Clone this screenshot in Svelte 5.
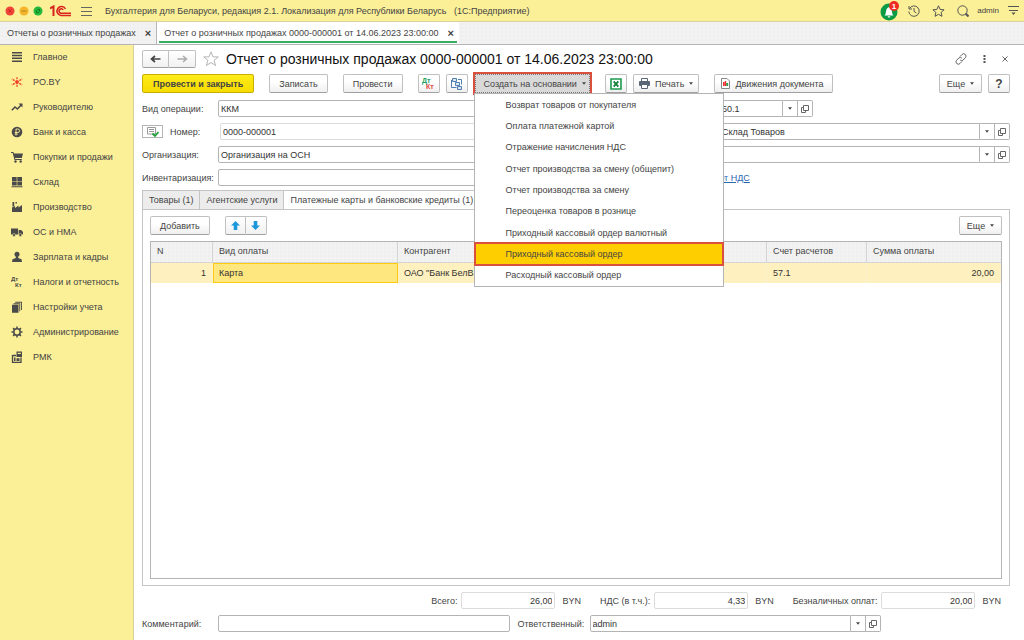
<script>
  const sections = [
    { name: 'Главное', icon: 'lines' },
    { name: 'PO.BY', icon: 'spark' },
    { name: 'Руководителю', icon: 'trend' },
    { name: 'Банк и касса', icon: 'coin' },
    { name: 'Покупки и продажи', icon: 'cart' },
    { name: 'Склад', icon: 'boxes' },
    { name: 'Производство', icon: 'factory' },
    { name: 'ОС и НМА', icon: 'truck' },
    { name: 'Зарплата и кадры', icon: 'person' },
    { name: 'Налоги и отчетность', icon: 'dtkt' },
    { name: 'Настройки учета', icon: 'books' },
    { name: 'Администрирование', icon: 'gear' },
    { name: 'РМК', icon: 'register' }
  ];

  const actions = [
    'Возврат товаров от покупателя',
    'Оплата платежной картой',
    'Отражение начисления НДС',
    'Отчет производства за смену (общепит)',
    'Отчет производства за смену',
    'Переоценка товаров в рознице',
    'Приходный кассовый ордер валютный',
    'Приходный кассовый ордер',
    'Расходный кассовый ордер'
  ];
  let current = $state(7);

  const totals = [
    { id: 'total', label: 'Всего:', value: '26,00' },
    { id: 'vat', label: 'НДС (в т.ч.):', value: '4,33' },
    { id: 'cashless', label: 'Безналичных оплат:', value: '20,00' }
  ];
</script>

{#snippet caret()}
  <svg class="caret" viewBox="0 0 5 3" width="4" height="3"><path d="M0 0h5L2.500 3z" fill="#444" /></svg>
{/snippet}

{#snippet fieldButtons()}
  <button class="fbtn" aria-label="Выбрать">{@render caret()}</button>
  <button class="fbtn" aria-label="Открыть">
    <svg viewBox="0 0 8 8" width="8" height="8" fill="none" stroke="#666"><path d="M2.500 .5h5v5h-5zM2.500 2.500h-2v5h4v-2" /></svg>
  </button>
{/snippet}

{#snippet sectionIcon(name)}
  <svg class="sicon" viewBox="0 0 12 12" width="12" height="12" fill="#4a4a4a">
    {#if name === 'lines'}
      <path d="M1 1h10v1.500H1zM1 3.800h10v1.500H1zM1 6.600h10v1.500H1zM1 9.400h10v1.500H1z" />
    {:else if name === 'spark'}
      <g stroke="#f0402a" stroke-width="1.300" stroke-dasharray="2 .7"><path d="M6 6V.5M6 6v5.500M6 6L.8 3M6 6l5.200-3M6 6L.8 9M6 6l5.200 3" /></g>
      <circle cx="6" cy="6" r="1.500" fill="#f0402a" />
    {:else if name === 'trend'}
      <path d="M.8 9.200L4 6l2.400 2 3.800-4" fill="none" stroke="#4a4a4a" stroke-width="1.600" /><path d="M7.500 2.500h4v4z" />
    {:else if name === 'coin'}
      <circle cx="6" cy="6" r="5.300" /><path d="M5 9.500V3h1.800a1.700 1.700 0 010 3.500H3.800M3.800 8h3" fill="none" stroke="#fbef97" stroke-width=".9" />
    {:else if name === 'cart'}
      <path d="M0 1h2.400l.6 1.500h9L10.800 7H4l.3 1h6.500v1H3.500L1.700 2H0z" /><circle cx="4.500" cy="10.500" r="1.200" /><circle cx="9.700" cy="10.500" r="1.200" />
    {:else if name === 'boxes'}
      <path d="M1 1h4.700v4H1zM6.300 1H11v4H6.300zM1 5.600h4.700v4H1zM6.300 5.600H11v4H6.300zM.5 10.200h11v1H.5z" />
    {:else if name === 'factory'}
      <path d="M1 11V6.500L4 5v2l3.500-2.500v2L11 4v7zM1.500 1h1.700v4l-1.700.8zM4.500 1h1.400v1.500H4.500z" />
    {:else if name === 'truck'}
      <path d="M0 2.500h7v6H0zM7.600 4h2.600L12 6v2.500H7.600z" /><circle cx="3" cy="9" r="1.500" stroke="#fbef97" stroke-width=".5" /><circle cx="9.300" cy="9" r="1.500" stroke="#fbef97" stroke-width=".5" />
    {:else if name === 'person'}
      <circle cx="6" cy="3.200" r="2.500" /><path d="M4.800 5h2.400v2l3.300 1.300.5 2.700H1l.5-2.700L4.800 7z" />
    {:else if name === 'dtkt'}
      <text x="0" y="5" font-size="6" font-weight="700">Дт</text><text x="4" y="11" font-size="6" font-weight="700">Кт</text>
    {:else if name === 'books'}
      <path d="M1 3.800h6.500v8H1zM2.500 2.300h6.700v8h-.9V3.200H2.500zM4.200.8H11V9h-.9V1.700H4.200z" />
    {:else if name === 'gear'}
      <circle cx="6" cy="6" r="3.200" fill="none" stroke="#4a4a4a" stroke-width="1.500" />
      <path d="M6 .5v2M6 9.500v2M.5 6h2M9.500 6h2M2.100 2.100l1.500 1.500M8.400 8.400l1.500 1.500M2.100 9.900l1.500-1.500M8.400 3.600l1.500-1.500" stroke="#4a4a4a" stroke-width="1.500" />
    {:else}
      <path d="M1.500 4.500h3.500M1.500 4v7.500h8.500V6.500" fill="none" stroke="#4a4a4a" stroke-width="1.300" /><path d="M5.500.5H11v5.500H5.500zM3 6.500h1.500v3.500H3zM5.500 7.300h3V10h-3z" /><path d="M6.700 1.800h3.200v1.200H6.700z" fill="#fbef97" />
    {/if}
  </svg>
{/snippet}

<div class="app">
  <header class="titlebar">
    <svg width="38" height="10" viewBox="0 0 38 10">
      <circle cx="5" cy="5" r="4.500" fill="#f04438" /><path d="M3.500 3.500l3 3M6.500 3.500l-3 3" stroke="#c92a20" />
      <circle cx="19" cy="5" r="4.500" fill="#f3b52c" /><path d="M16.500 5h5" stroke="#b98317" />
      <circle cx="33" cy="5" r="4.500" fill="#25b83c" /><path d="M31.500 4.500v2h2M32.500 3.500h2v2" stroke="#0b7a1c" fill="none" />
    </svg>
    <svg class="logo" width="21" height="12" viewBox="0 0 21 12" fill="none" stroke="#d8231f">
      <path d="M0 3.500L3.500 1.500v9.500" stroke-width="2" />
      <path d="M15.500 4A4.500 4.500 0 1011 10.500h10" stroke-width="1.500" /><path d="M13.200 5A2.200 2.200 0 1011.500 8.200H21" stroke-width="1.500" />
    </svg>
    <button class="plain burger" aria-label="Меню">
      <svg width="11" height="10" viewBox="0 0 11 10" stroke="#666"><path d="M0 1.500h11M0 5.500h11M0 9.500h11" /></svg>
    </button>
    <span class="apptitle">Бухгалтерия для Беларуси, редакция 2.1. Локализация для Республики Беларусь&nbsp;&nbsp; (1С:Предприятие)</span>
    <div class="tools">
      <button class="plain bell" aria-label="Уведомления">
        <svg width="20" height="20" viewBox="0 0 20 20">
          <circle cx="9" cy="11" r="8.500" fill="#0b9b45" /><path d="M4.500 14.500c2-1.500 1-6 3-7.500l1.500-1 1.500 1c2 1.500 1 6 3 7.500zM7.500 15.200h3L9 17z" fill="#fff" />
          <circle cx="14" cy="5" r="5" fill="#ee2e24" /><text x="14" y="8" font-size="8" font-weight="700" fill="#fff" text-anchor="middle">1</text>
        </svg>
      </button>
      <button class="plain" aria-label="История">
        <svg width="12" height="12" viewBox="0 0 12 12" fill="none" stroke="#555"><path d="M1.500 3.500a5.200 5.200 0 11-.7 3M1 1v3h3M6 3v3.300l2.300 1.700" /></svg>
      </button>
      <button class="plain" aria-label="Избранное">
        <svg width="13" height="12" viewBox="0 0 13 12" fill="none" stroke="#555"><path d="M6.500.8l1.600 3.600 4 .4-3 2.600.9 3.900-3.500-2-3.500 2 .9-3.900-3-2.600 4-.4z" /></svg>
      </button>
      <button class="plain" aria-label="Поиск">
        <svg width="12" height="12" viewBox="0 0 12 12" fill="none" stroke="#555"><circle cx="5.500" cy="5.500" r="4.700" /><path d="M8.500 8.500L11.500 11.500" stroke-width="2" /></svg>
      </button>
      <span class="user">admin</span>
      <button class="plain" aria-label="Настройки">
        <svg width="11" height="9" viewBox="0 0 11 9"><path d="M0 .5h11M1 4.500h9" stroke="#555" /><path d="M3.500 6.500h4l-2 2.500z" fill="#555" /></svg>
      </button>
    </div>
  </header>

  <nav class="tabs textured">
    <div class="tab"><span>Отчеты о розничных продажах</span><button class="plain x" aria-label="Закрыть">×</button></div>
    <div class="tab active"><span>Отчет о розничных продажах 0000-000001 от 14.06.2023 23:00:00</span><button class="plain x" aria-label="Закрыть">×</button></div>
  </nav>

  <div class="body">
    <aside>
      {#each sections as s}
        <a href="#section">{@render sectionIcon(s.icon)}<span>{s.name}</span></a>
      {/each}
    </aside>

    <main>
      <div class="heading">
        <div class="pair nav">
          <button aria-label="Назад"><svg width="11" height="8" viewBox="0 0 11 8"><path d="M10.500 4H2M5 1L1.500 4 5 7" fill="none" stroke="#444" stroke-width="1.700" /></svg></button>
          <button aria-label="Вперед"><svg width="11" height="8" viewBox="0 0 11 8"><path d="M.5 4h8.500M6 1l3.500 3L6 7" fill="none" stroke="#aaa" stroke-width="1.500" /></svg></button>
        </div>
        <svg width="16" height="16" viewBox="0 0 16 16" fill="none" stroke="#b4b4b4"><path d="M8 .9l2 5h5.300l-4.200 3.400 1.500 5.300L8 11.500l-4.600 3.100 1.500-5.300L.7 5.900H6z" /></svg>
        <h1>Отчет о розничных продажах 0000-000001 от 14.06.2023 23:00:00</h1>
        <div class="winbtns">
          <button class="plain" aria-label="Ссылка"><svg width="12" height="12" viewBox="0 0 12 12" fill="none" stroke="#666"><path d="M5 3.500l2-2a2.200 2.200 0 013.300 3.300L8.200 7a2.200 2.200 0 01-3 0M7 8.500l-2 2a2.200 2.200 0 01-3.300-3.300L3.800 5a2.200 2.200 0 013 0" /></svg></button>
          <button class="plain" aria-label="Действия"><svg width="3" height="8" viewBox="0 0 3 8" fill="#555"><path d="M.5 0h2v2h-2zM.5 3h2v2h-2zM.5 6h2v2h-2z" /></svg></button>
          <button class="plain" aria-label="Закрыть"><svg width="6" height="6" viewBox="0 0 6 6" stroke="#666"><path d="M.5.500l5 5M5.500.500l-5 5" /></svg></button>
        </div>
      </div>

      <div class="commands">
        <button class="btn primary">Провести и закрыть</button>
        <button class="btn">Записать</button>
        <button class="btn">Провести</button>
        <div class="icons">
          <button class="btn sq" aria-label="Проводки"><svg width="13" height="13" viewBox="0 0 13 13" font-size="7" font-weight="700"><text x="0" y="6" fill="#24a05a">Дт</text><text x="4" y="12" fill="#e2483c">Кт</text></svg></button>
          <button class="btn sq" aria-label="Структура"><svg width="12" height="12" viewBox="0 0 12 12" fill="#dbe7f5" stroke="#4f7fb5"><path d="M1.500.5h4v3h-4zM4.500 4.500h4v3h-4zM6.500 8.500h4v3h-4z" /><path d="M.5 2v7.500h5M7 1.500h3.500v5" fill="none" /></svg></button>
        </div>
        <div class="create">
          <button class="btn open">Создать на основании {@render caret()}</button>
          <div class="menu" role="menu">
            {#each actions as a, i}
              <button role="menuitem" class:current={i === current} onmouseenter={() => (current = i)}>{a}</button>
            {/each}
          </div>
        </div>
        <div class="icons">
          <button class="btn sq" aria-label="Excel"><svg width="12" height="12" viewBox="0 0 12 12"><path d="M1 1h10v10H1z" fill="#fff" stroke="#1f9a4d" stroke-width="1.600" /><path d="M3.700 3.300l4.600 5.400M8.300 3.300L3.700 8.700" stroke="#16803c" stroke-width="1.800" /></svg></button>
          <button class="btn print"><svg width="11" height="11" viewBox="0 0 11 11"><path d="M2.500.5h6v3h-6z" fill="#fff" stroke="#596474" /><rect y="3" width="11" height="5" rx="1" fill="#596474" /><path d="M2.500 6.500h6v4h-6z" fill="#fff" stroke="#596474" /></svg>Печать {@render caret()}</button>
        </div>
        <button class="btn moves"><svg width="9" height="11" viewBox="0 0 9 11"><path d="M.5.500h5.500L8.500 3v7.500h-8z" fill="#fff" stroke="#888" /><path d="M2 4h1.700v4H2z" fill="#e33" /><path d="M3.700 3h1.500v5H3.700z" fill="#e33" /><path d="M5.200 5h2v3h-2z" fill="#2a9a44" /></svg>Движения документа</button>
        <div class="right">
          <button class="btn more">Еще {@render caret()}</button>
          <button class="btn sq help">?</button>
        </div>
      </div>

      <div class="form">
        <div class="field"><label for="op">Вид операции:</label><input id="op" value="ККМ" /></div>
        <div class="field second short"><div class="combo"><input aria-label="Счет кассы" value="50.1" />{@render fieldButtons()}</div></div>

        <div class="field">
          <div class="lead">
            <button class="status" aria-label="Проведен"><svg width="12" height="10" viewBox="0 0 12 10" fill="none"><path d="M.5.500h8v6.500h-8zM2 2.500h5M2 4.500h5" stroke="#999" /><path d="M5.500 6.500l2.500 2.500 3.500-4" stroke="#21a038" stroke-width="1.800" /></svg></button>
            <label for="num">Номер:</label>
          </div>
          <input id="num" class="ro" value="0000-000001" />
        </div>
        <div class="field second"><div class="combo"><input aria-label="Склад" value="Склад Товаров" />{@render fieldButtons()}</div></div>

        <div class="field"><label for="org">Организация:</label><input id="org" value="Организация на ОСН" /></div>
        <div class="field second"><div class="combo"><input aria-label="Подразделение" />{@render fieldButtons()}</div></div>

        <div class="field"><label for="inv">Инвентаризация:</label><input id="inv" /></div>
        <div class="field link"><a href="#vat">Учет НДС</a></div>
      </div>

      <div class="pages">
        <button>Товары (1)</button><button>Агентские услуги</button><button class="active">Платежные карты и банковские кредиты (1)</button>
      </div>
      <section class="panel">
        <div class="commands">
          <button class="btn">Добавить</button>
          <div class="pair">
            <button aria-label="Вверх"><svg width="9" height="9" viewBox="0 0 9 9"><path d="M4.500 0L9 4.500H6.300V9H2.700V4.500H0z" fill="#1d97dc" /></svg></button>
            <button aria-label="Вниз"><svg width="9" height="9" viewBox="0 0 9 9"><path d="M4.500 9L9 4.500H6.300V0H2.700v4.500H0z" fill="#1d97dc" /></svg></button>
          </div>
          <div class="right"><button class="btn more">Еще {@render caret()}</button></div>
        </div>
        <div class="grid">
          <table>
            <colgroup><col class="c1" /><col class="c2" /><col /><col class="c4" /><col class="c5" /></colgroup>
            <thead class="textured"><tr><th>N</th><th>Вид оплаты</th><th>Контрагент</th><th>Счет расчетов</th><th>Сумма оплаты</th></tr></thead>
            <tbody><tr><td class="num">1</td><td class="cell">Карта</td><td>ОАО "Банк БелВЭБ"</td><td>57.1</td><td class="num">20,00</td></tr></tbody>
          </table>
        </div>
      </section>

      <div class="totals">
        {#each totals as t}
          <div class="total"><label for={t.id}>{t.label}</label><input id={t.id} class="ro" value={t.value} readonly /><span>BYN</span></div>
        {/each}
      </div>
      <div class="bottom">
        <label for="comment">Комментарий:</label><input id="comment" />
        <label for="resp" class="resp">Ответственный:</label>
        <div class="combo"><input id="resp" value="admin" />{@render fieldButtons()}</div>
      </div>
    </main>
  </div>
</div>

<style>
  :global(body) { margin: 0; background: #fff; }
  * { box-sizing: border-box; }
  .app { min-height: 100vh; display: flex; flex-direction: column; font-family: 'Liberation Sans', Arial, sans-serif; font-size: 9px; line-height: 12px; color: #444; }
  button, input { font: inherit; color: inherit; margin: 0; }
  svg { display: block; flex: none; }
  .plain { border: 0; background: none; padding: 0; display: flex; align-items: center; }
  .textured { background: radial-gradient(#eeeeee 1px, transparent 1px) 0 0 / 4px 4px #f2f2f2; }

  .titlebar { height: 22px; display: flex; align-items: center; padding: 0 5px; background: #fbef97; border-bottom: 1px solid #d9d2a0; white-space: nowrap; }
  .logo { margin-left: 7px; }
  .burger { margin: 0 13px 0 10px; }
  .tools { margin-left: auto; display: flex; align-items: center; gap: 12px; }
  .bell { margin-right: -4px; }
  .user { font-size: 8px; margin: 0 -3px 0 -4px; }

  .tabs { height: 23px; display: flex; border-bottom: 1px solid #b5b5b5; white-space: nowrap; }
  .tab { display: flex; align-items: center; gap: 9px; padding: 0 5px 0 7px; border-right: 1px solid #b5b5b5; }
  .tab.active { background: #fff; position: relative; border: 0; }
  .tab.active::after { content: ''; position: absolute; left: 2px; right: 2px; bottom: 1px; height: 2px; background: #3bad62; }
  .x { font-size: 11px; font-weight: 700; }

  .body { flex: 1; display: flex; }
  aside { width: 134px; flex: none; background: #fbef97; border-right: 1px solid #d6cf9c; }
  aside a { height: 25px; display: flex; align-items: center; gap: 10px; padding: 0 0 2px 11px; color: #444; text-decoration: none; white-space: nowrap; }

  main { flex: 1; min-width: 0; display: flex; flex-direction: column; padding: 5px 14px 8px 8px; }
  .heading { display: flex; align-items: center; height: 18px; gap: 7px; }
  h1 { font-size: 14px; line-height: 18px; font-weight: 400; color: #111; margin: 0; white-space: nowrap; }
  .winbtns { margin-left: auto; display: flex; align-items: center; gap: 16px; padding-right: 2px; }

  .pair { display: flex; }
  .pair button { width: 21px; height: 19px; display: flex; align-items: center; justify-content: center; padding: 0; border: 1px solid #c0c0c0; border-bottom-color: #a0a0a0; background: linear-gradient(#fff, #f1f1f1); border-radius: 2px 0 0 2px; }
  .pair button + button { border-left: 0; border-radius: 0 2px 2px 0; }
  .pair.nav button { width: 27px; height: 18px; }

  .commands { display: flex; align-items: center; gap: 15px; margin-top: 6px; }
  .btn { height: 19px; display: flex; align-items: center; justify-content: center; gap: 5px; padding: 0 9px; border: 1px solid #c0c0c0; border-bottom-color: #a0a0a0; border-radius: 2px; background: linear-gradient(#fff 40%, #efefef); white-space: nowrap; }
  .btn.primary { padding: 0 10px; background: linear-gradient(#ffec1a, #f7dc00); border-color: #c9ae00; font-weight: 700; }
  .btn.sq { width: 22px; padding: 0; }
  .btn.help { font-size: 12px; font-weight: 700; }
  .btn.more { width: 43px; padding: 0; }
  .btn.print { padding: 0 5px; }
  .btn.moves { padding: 0 8px 0 6px; }
  .icons, .right { display: flex; gap: 6px; }
  .right { margin-left: auto; }
  .create { position: relative; margin-left: -8px; }
  .btn.open { background: #d9d9d9; border: 1px dotted #777; border-radius: 0; padding: 0 3px 0 8px; outline: 2px solid #d9503f; }
  .menu { position: absolute; z-index: 2; top: 19px; left: -1px; width: 250px; height: 194px; display: grid; grid-auto-rows: 1fr; background: #fff; border: 1px solid #b4b4b4; }
  .menu button { border: 0; background: none; padding: 0 0 0 31px; text-align: left; line-height: 12px; }
  .menu button.current { background: #ffce00; box-shadow: 0 0 0 1px #d9503f, inset 0 0 0 1px #d9503f; }

  .form { display: grid; grid-template-columns: repeat(2, minmax(0, 1fr)); gap: 6px 0; margin-top: 7px; }
  .field { display: flex; align-items: center; height: 17px; padding-right: 14px; }
  .field label { width: 76px; white-space: nowrap; }
  input { height: 17px; min-width: 0; border: 1px solid #b4b4b4; border-radius: 2px; background: #fff; padding: 0 2px; outline: 0; color: #333; }
  .field input { flex: 1; }
  input.ro { border-color: #dcdcdc; }
  .lead { width: 78px; display: flex; align-items: center; gap: 7px; }
  .status { flex: none; width: 21px; height: 13px; display: flex; align-items: center; justify-content: center; padding: 0; border: 1px solid #b4b4b4; background: #fff; }
  .field.second { padding: 0 0 0 142px; }
  .field.second.short { padding-right: 197px; }
  .field.second input { padding-left: 3px; }
  .combo { display: flex; flex: 1; min-width: 0; }
  .combo input { flex: 1; border-radius: 2px 0 0 2px; }
  .fbtn { flex: none; width: 15px; height: 17px; display: flex; align-items: center; justify-content: center; padding: 0; border: 1px solid #b4b4b4; border-left: 0; background: #fff; }
  .fbtn:last-child { border-radius: 0 2px 2px 0; }
  .field.link { padding-left: 133px; }
  .field.link a { color: #2a66b0; }

  .pages { display: flex; margin-top: 4px; position: relative; }
  .pages button { height: 19px; padding: 0 6px; border: 1px solid #c4c4c4; border-right: 0; background: #ececec; border-bottom: 0; white-space: nowrap; }
  .pages button.active { background: #fff; border-right: 1px solid #c4c4c4; margin-bottom: -1px; }
  .panel { flex: 1; display: flex; flex-direction: column; border: 1px solid #c4c4c4; padding: 0 7px 6px; }
  .grid { flex: 1; margin-top: 6px; border: 1px solid #b4b4b4; }
  table { width: 100%; border-collapse: separate; border-spacing: 0; table-layout: fixed; }
  .c1 { width: 62px; } .c2 { width: 185px; } .c4 { width: 100px; } .c5 { width: 134px; }
  th { height: 21px; padding: 0 6px 2px; font-weight: 400; text-align: left; border-right: 1px solid #d4d4d4; border-bottom: 1px solid #d4d4d4; }
  th:last-child { border-right: 0; }
  td { height: 20px; padding: 0 6px 1px; background: #fff1bf; color: #333; white-space: nowrap; overflow: hidden; border-right: 1px dotted #f9f3dd; }
  td.num { text-align: right; }
  td.cell { background: #ffe77f; border: 1px solid #fccb12; padding: 0 5px 1px; }

  .totals { display: flex; justify-content: flex-end; gap: 19px; margin-top: 6px; padding-right: 9px; }
  .total { display: flex; align-items: center; }
  .total label { margin-right: 4px; }
  .total input { width: 94px; text-align: right; }
  .total span { margin-left: 7px; }
  .bottom { display: grid; grid-template-columns: 76px minmax(0, 1fr) 80px minmax(0, 1fr); align-items: center; margin-top: 6px; padding-right: 129px; }
  .bottom label { white-space: nowrap; }
  .bottom label.resp { padding-left: 8px; }
</style>
